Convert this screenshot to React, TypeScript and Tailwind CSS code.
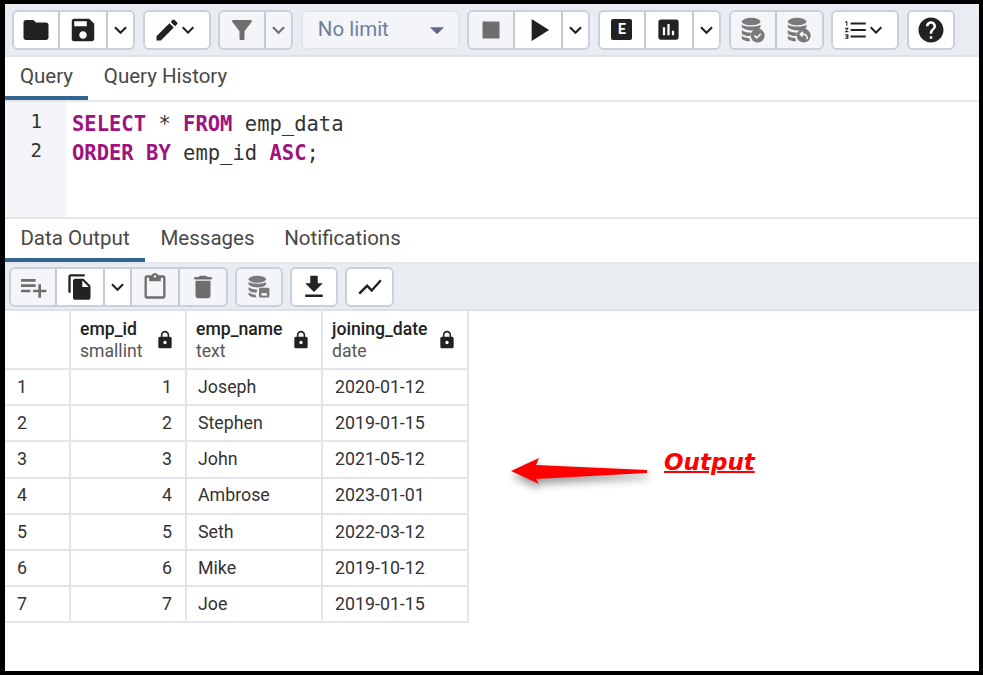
import type { ReactNode } from "react";
import {
  MdFolder,
  MdSave,
  MdKeyboardArrowDown,
  MdEdit,
  MdFilterAlt,
  MdStop,
  MdPlayArrow,
  MdFormatListNumbered,
  MdHelp,
  MdPlaylistAdd,
  MdFileCopy,
  MdContentPaste,
  MdDelete,
  MdFileDownload,
  MdShowChart,
  MdLock,
  MdPoll,
  MdArrowDropDown,
} from "react-icons/md";

function Db({ badge, size = 28 }: { badge: "check" | "undo" | "save"; size?: number }) {
  return (
    <svg width={size} height={size} viewBox="0 0 30 30" fill="#7a7a7a">
      <ellipse cx="13" cy="6" rx="10" ry="4" />
      <path d="M3 9c2 3 18 3 20 0v3c-1 2-4 3-8 3.400-5 .3-10-1-12-3.400z" />
      <path d="M3 15c2 2 6 3 10 3l-1 3.500c-4 0-8-1-9-3z" />
      <path d="M3 21c2 2 5 2.500 8 2.800l1 3.200c-4 0-8-1-9-3z" />
      {badge === "save" ? (
        <rect x="15" y="16" width="12" height="11" rx="1.500" />
      ) : (
        <circle cx="20" cy="21" r="7.500" />
      )}
      {badge === "check" && <path d="M16.500 21l2.500 2.500 4.500-4.500" stroke="#f3f5f9" strokeWidth="1.800" fill="none" />}
      {badge === "undo" && <path d="M23.500 25c1-3-1-5.500-4-5.500h-2M19 17l-2.500 2.500L19 22" stroke="#f3f5f9" strokeWidth="1.800" fill="none" />}
      {badge === "save" && <rect x="18" y="22" width="6" height="3" fill="#f3f5f9" />}
    </svg>
  );
}

function Btn({ w, off, last, children }: { w: string; off?: boolean; last?: boolean; children: ReactNode }) {
  return (
    <div
      className={`flex h-full items-center justify-center ${w} ${off ? "bg-[#f3f5f9] text-[#6e6e6e]" : "bg-white text-[#222222]"} ${last ? "" : "border-r-2 border-[#c3cad6]"}`}
    >
      {children}
    </div>
  );
}

function Group({ children, className = "" }: { children: ReactNode; className?: string }) {
  return (
    <div className={`flex h-[40px] shrink-0 overflow-hidden rounded-[6px] border-2 border-[#c9d0db] ${className}`}>
      {children}
    </div>
  );
}

function Tab({ w, active, children }: { w: string; active?: boolean; children: ReactNode }) {
  return (
    <div className={`flex h-full items-center justify-center border-b-[4px] text-[20.5px] text-[#484848] ${w} ${active ? "border-[#326690]" : "border-transparent"}`}>
      {children}
    </div>
  );
}

const rows = [
  [1, "Joseph", "2020-01-12"],
  [2, "Stephen", "2019-01-15"],
  [3, "John", "2021-05-12"],
  [4, "Ambrose", "2023-01-01"],
  [5, "Seth", "2022-03-12"],
  [6, "Mike", "2019-10-12"],
  [7, "Joe", "2019-01-15"],
] as const;

const headers = [
  ["emp_id", "smallint"],
  ["emp_name", "text"],
  ["joining_date", "date"],
] as const;

export default function App() {
  const chevron = <MdKeyboardArrowDown size={26} />;
  return (
    <div className="flex h-[675px] w-[983px] flex-col overflow-hidden border-y-[4px] border-r-[4px] border-l-[5px] border-black bg-white font-['Roboto',sans-serif]">
      <div className="flex h-[53px] shrink-0 items-center gap-[7.6px] border-b-2 border-[#dde1e8] bg-[#e9edf2] pl-[7px]">
        <Group>
          <Btn w="w-[46px]"><MdFolder size={30} /></Btn>
          <Btn w="w-[48px]"><MdSave size={30} /></Btn>
          <Btn w="w-[25px]" last>{chevron}</Btn>
        </Group>
        <Group>
          <Btn w="w-[64px]" last><MdEdit size={28} /><MdKeyboardArrowDown size={24} className="-ml-[5px]" /></Btn>
        </Group>
        <Group>
          <Btn w="w-[46px]" off><MdFilterAlt size={30} /></Btn>
          <Btn w="w-[25px]" off last>{chevron}</Btn>
        </Group>
        <Group className="border-[#e2e6ec]">
          <div className="flex h-full w-[155px] items-center justify-between bg-[#f3f5f9] pr-[4px] pl-[15px] text-[20.5px] text-[#6f7f9c]">
            No limit
            <MdArrowDropDown size={34} className="text-[#5f6a8a]" />
          </div>
        </Group>
        <Group>
          <Btn w="w-[46px]" off><MdStop size={34} /></Btn>
          <Btn w="w-[48px]"><MdPlayArrow size={38} /></Btn>
          <Btn w="w-[25px]" last>{chevron}</Btn>
        </Group>
        <Group>
          <Btn w="w-[46px]">
            <span className="flex h-[21px] w-[21px] items-center justify-center rounded-[2px] bg-[#222222] text-[14px] font-bold text-white">E</span>
          </Btn>
          <Btn w="w-[48px]"><MdPoll size={27} /></Btn>
          <Btn w="w-[25px]" last>{chevron}</Btn>
        </Group>
        <Group>
          <Btn w="w-[46px]" off><Db badge="check" /></Btn>
          <Btn w="w-[45px]" off last><Db badge="undo" /></Btn>
        </Group>
        <Group>
          <Btn w="w-[64px]" last><MdFormatListNumbered size={26} /><MdKeyboardArrowDown size={24} className="-ml-[5px]" /></Btn>
        </Group>
        <Group>
          <Btn w="w-[44px]" last><MdHelp size={30} /></Btn>
        </Group>
      </div>

      <div className="flex h-[45px] shrink-0 border-b-2 border-[#e3e6ec]">
        <Tab w="w-[83px]" active>Query</Tab>
        <Tab w="w-[155px]">Query History</Tab>
      </div>

      <div className="flex h-[117px] shrink-0 border-b-2 border-[#e3e6ec] font-['DejaVu_Sans_Mono',monospace] text-[20.5px] leading-[29px]">
        <div className="w-[61px] shrink-0 bg-[#f3f5f9] pt-[5px] pr-[24px] text-right text-[19px] text-[#333333]">
          <div>1</div>
          <div>2</div>
        </div>
        <div className="pt-[8px] pl-[6px] text-[#333333]">
          <div><span className="font-bold text-[#a0127f]">SELECT</span> * <span className="font-bold text-[#a0127f]">FROM</span> emp_data</div>
          <div><span className="font-bold text-[#a0127f]">ORDER BY</span> emp_id <span className="font-bold text-[#a0127f]">ASC</span>;</div>
        </div>
      </div>

      <div className="flex h-[45px] shrink-0 border-b-2 border-[#e3e6ec]">
        <Tab w="w-[140px]" active>Data Output</Tab>
        <Tab w="w-[125px]">Messages</Tab>
        <Tab w="w-[145px]">Notifications</Tab>
      </div>

      <div className="flex h-[47px] shrink-0 items-center gap-[7px] border-b-2 border-[#dde1e8] bg-[#e9edf2] pl-[4px]">
        <Group>
          <Btn w="w-[46px]" off><MdPlaylistAdd size={32} /></Btn>
          <Btn w="w-[48px]"><MdFileCopy size={28} /></Btn>
          <Btn w="w-[27px]">{chevron}</Btn>
          <Btn w="w-[48px]" off><MdContentPaste size={28} /></Btn>
          <Btn w="w-[46px]" off last><MdDelete size={30} /></Btn>
        </Group>
        <Group>
          <Btn w="w-[44px]" off last><Db badge="save" size={26} /></Btn>
        </Group>
        <Group>
          <Btn w="w-[44px]" last><MdFileDownload size={30} /></Btn>
        </Group>
        <Group>
          <Btn w="w-[45px]" last><MdShowChart size={28} /></Btn>
        </Group>
      </div>

      <div className="flex items-start">
        <table className="w-[463px] shrink-0 table-fixed border-collapse text-[17.8px] text-[#333333]">
          <colgroup>
            <col className="w-[65px]" />
            <col className="w-[116px]" />
            <col className="w-[136px]" />
            <col className="w-[146px]" />
          </colgroup>
          <thead>
            <tr className="h-[58px]">
              <th className="border-r-2 border-b-2 border-[#e3e5ec]" />
              {headers.map(([name, type]) => (
                <th key={name} className="border-r-2 border-b-2 border-[#e3e5ec] pr-[10px] pl-[9px] text-left font-normal">
                  <div className="flex items-center justify-between">
                    <div className="text-[17.6px] leading-[22px]">
                      <div className="font-medium text-[#222222]">{name}</div>
                      <div className="text-[#555555]">{type}</div>
                    </div>
                    <MdLock size={20} className="shrink-0 text-[#222222]" />
                  </div>
                </th>
              ))}
            </tr>
          </thead>
          <tbody>
            {rows.map(([id, name, date]) => (
              <tr key={id} className="h-[36.2px]">
                <td className="border-r-2 border-b-2 border-[#e3e5ec] pl-[12px]">{id}</td>
                <td className="border-r-2 border-b-2 border-[#e3e5ec] pr-[13px] text-right">{id}</td>
                <td className="border-r-2 border-b-2 border-[#e3e5ec] pl-[11px]">{name}</td>
                <td className="border-r-2 border-b-2 border-[#e3e5ec] pl-[12px]">{date}</td>
              </tr>
            ))}
          </tbody>
        </table>

        <div className="mt-[136px] ml-[42px] flex items-start gap-[15px]">
          <svg width="138" height="30" viewBox="0 0 138 30" className="mt-[9px] drop-shadow-[1px_5px_4px_rgba(0,0,0,0.4)]">
            <path d="M0 15 L28 2 L25 9 L136 14 L136 17 L25 23 L28 28 Z" fill="#ff0000" />
          </svg>
          <span className="font-['DejaVu_Sans',sans-serif] text-[23px] leading-[30px] font-bold text-[#ff0000] italic underline decoration-2">Output</span>
        </div>
      </div>
    </div>
  );
}
